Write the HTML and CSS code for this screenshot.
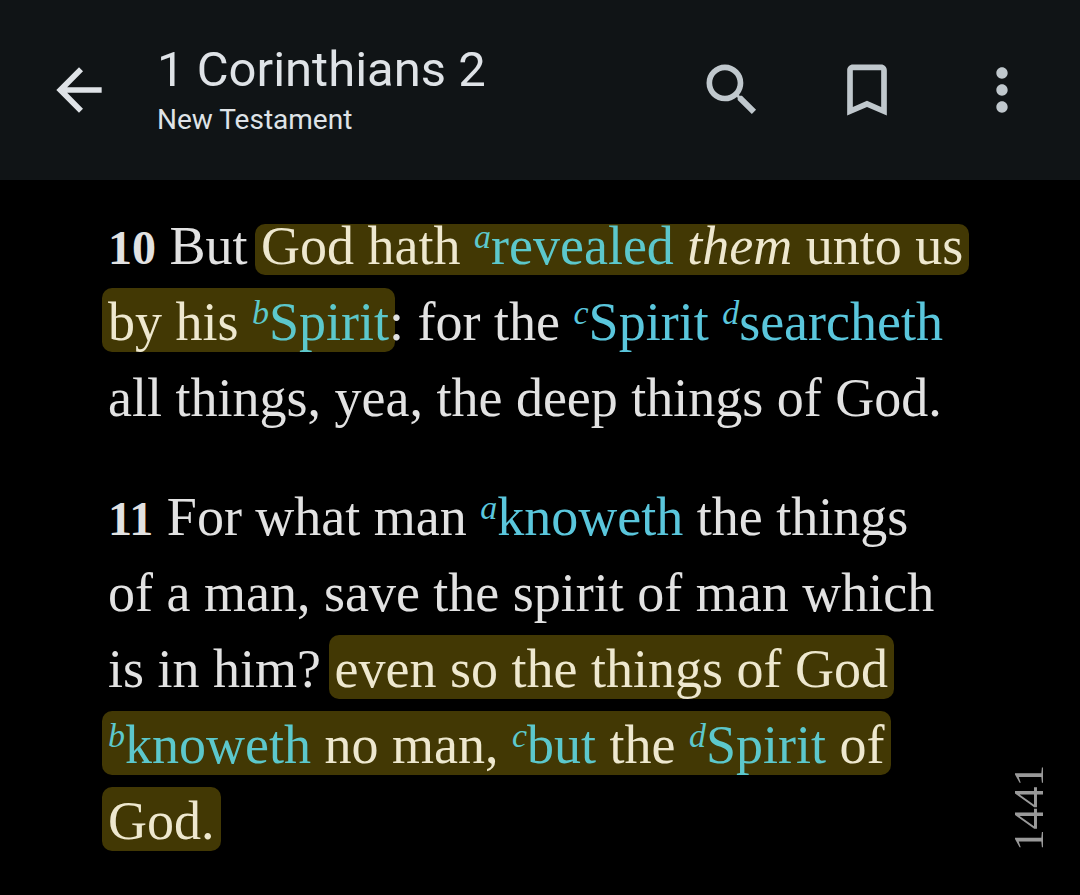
FILE: index.html
```html
<!DOCTYPE html>
<html lang="en">
<head>
    <meta charset="UTF-8">
    <meta name="viewport" content="width=device-width, initial-scale=1.0">
    <title>1 Corinthians 2</title>
    <link rel="stylesheet" href="styles.css">
</head>
<body>

<header class="toolbar">
    <button class="icon-button back" type="button" aria-label="Back">
        <svg width="68" height="68" viewBox="0 0 24 24"><path fill="currentColor" d="M20 11H7.830l5.590-5.590L12 4l-8 8 8 8 1.410-1.410L7.830 13H20v-2z"/></svg>
    </button>
    <div class="titles">
        <h1>1 Corinthians 2</h1>
        <p>New Testament</p>
    </div>
    <button class="icon-button" type="button" aria-label="Search">
        <svg width="68" height="68" viewBox="0 0 24 24"><path fill="currentColor" d="M15.500 14h-.79l-.28-.27A6.471 6.471 0 0 0 16 9.500 6.500 6.500 0 1 0 9.500 16c1.610 0 3.090-.59 4.230-1.570l.27.280v.790l5 4.990L20.490 19l-4.990-5zm-6 0C7.010 14 5 11.990 5 9.500S7.010 5 9.500 5 14 7.010 14 9.500 11.990 14 9.500 14z"/></svg>
    </button>
    <button class="icon-button" type="button" aria-label="Bookmark">
        <svg width="68" height="68" viewBox="0 0 24 24"><path fill="currentColor" d="M17 3H7c-1.100 0-1.990.9-1.990 2L5 21l7-3 7 3V5c0-1.100-.9-2-2-2zm0 15-5-2.180L7 18V5h10v13z"/></svg>
    </button>
    <button class="icon-button" type="button" aria-label="More options">
        <svg width="68" height="68" viewBox="0 0 24 24"><path fill="currentColor" d="M12 8c1.100 0 2-.9 2-2s-.9-2-2-2-2 .9-2 2 .9 2 2 2zm0 2c-1.100 0-2 .9-2 2s.9 2 2 2 2-.9 2-2-.9-2-2-2zm0 6c-1.100 0-2 .9-2 2s.9 2 2 2 2-.9 2-2-.9-2-2-2z"/></svg>
    </button>
</header>

<main class="chapter">
    <p class="verse"><b>10</b> But <mark class="first">God hath <a href="#"><sup>a</sup>revealed</a> <i>them</i> unto us</mark><br><mark>by his <a href="#"><sup>b</sup>Spirit</a></mark>: for the <a href="#"><sup>c</sup>Spirit</a> <a href="#"><sup>d</sup>searcheth</a><br>all things, yea, the deep things of God.</p>
    <p class="verse"><b>11</b> For what man <a href="#"><sup>a</sup>knoweth</a> the things<br>of a man, save the spirit of man which<br>is in him? <mark>even so the things of God<br><a href="#"><sup>b</sup>knoweth</a> no man, <a href="#"><sup>c</sup>but</a> the <a href="#"><sup>d</sup>Spirit</a> of<br>God.</mark></p>
</main>

<span class="page-number">1441</span>

</body>
</html>
```
FILE: styles.css
```css
body {
    margin: 0;
    background-color: #000;
    color: #e2e2e2;
    font-family: "Liberation Serif", serif;
}

.toolbar {
    display: flex;
    align-items: center;
    height: 180px;
    padding: 0 44px 0 45px;
    box-sizing: border-box;
    background-color: #101416;
    font-family: Roboto, sans-serif;
}

.icon-button {
    display: flex;
    justify-content: center;
    width: 68px;
    margin-left: 67px;
    padding: 0;
    border: none;
    background: none;
    color: #c0c8cd;
    cursor: pointer;
}

.back {
    margin-left: 0;
    color: #dfe3e7;
}

.titles {
    flex: 1;
    padding-left: 44px;
}

h1,
.titles p {
    margin: 0;
    color: #dfe3e7;
    font-weight: 400;
}

h1 {
    font-size: 49px;
    line-height: 60px;
}

.titles p {
    font-size: 28px;
    line-height: 40px;
}

.chapter {
    padding: 28px 100px 0 108px;
}

.verse {
    margin: 0 0 43px;
    font-size: 54px;
    line-height: 76px;
}

.verse b {
    font-size: 48px;
    line-height: 0;
}

mark {
    padding: 4px 6px 0;
    margin: 0 -6px;
    border-radius: 10px;
    background-color: #423804;
    color: #eee8cf;
    -webkit-box-decoration-break: clone;
    box-decoration-break: clone;
}

/* the top line of the chapter has a shorter highlight */
.first {
    display: inline-block;
    padding: 0 6px 7px;
    line-height: 44px;
}

.verse a {
    color: #5ac6dc;
    text-decoration: none;
}

.verse mark a {
    color: #5cc8cc;
}

sup {
    font-size: 34px;
    font-style: italic;
    line-height: 0;
    vertical-align: 16px;
}

.page-number {
    position: fixed;
    right: 27px;
    bottom: 44px;
    color: #999;
    font-size: 43px;
    writing-mode: vertical-rl;
    transform: rotate(180deg);
}
```
